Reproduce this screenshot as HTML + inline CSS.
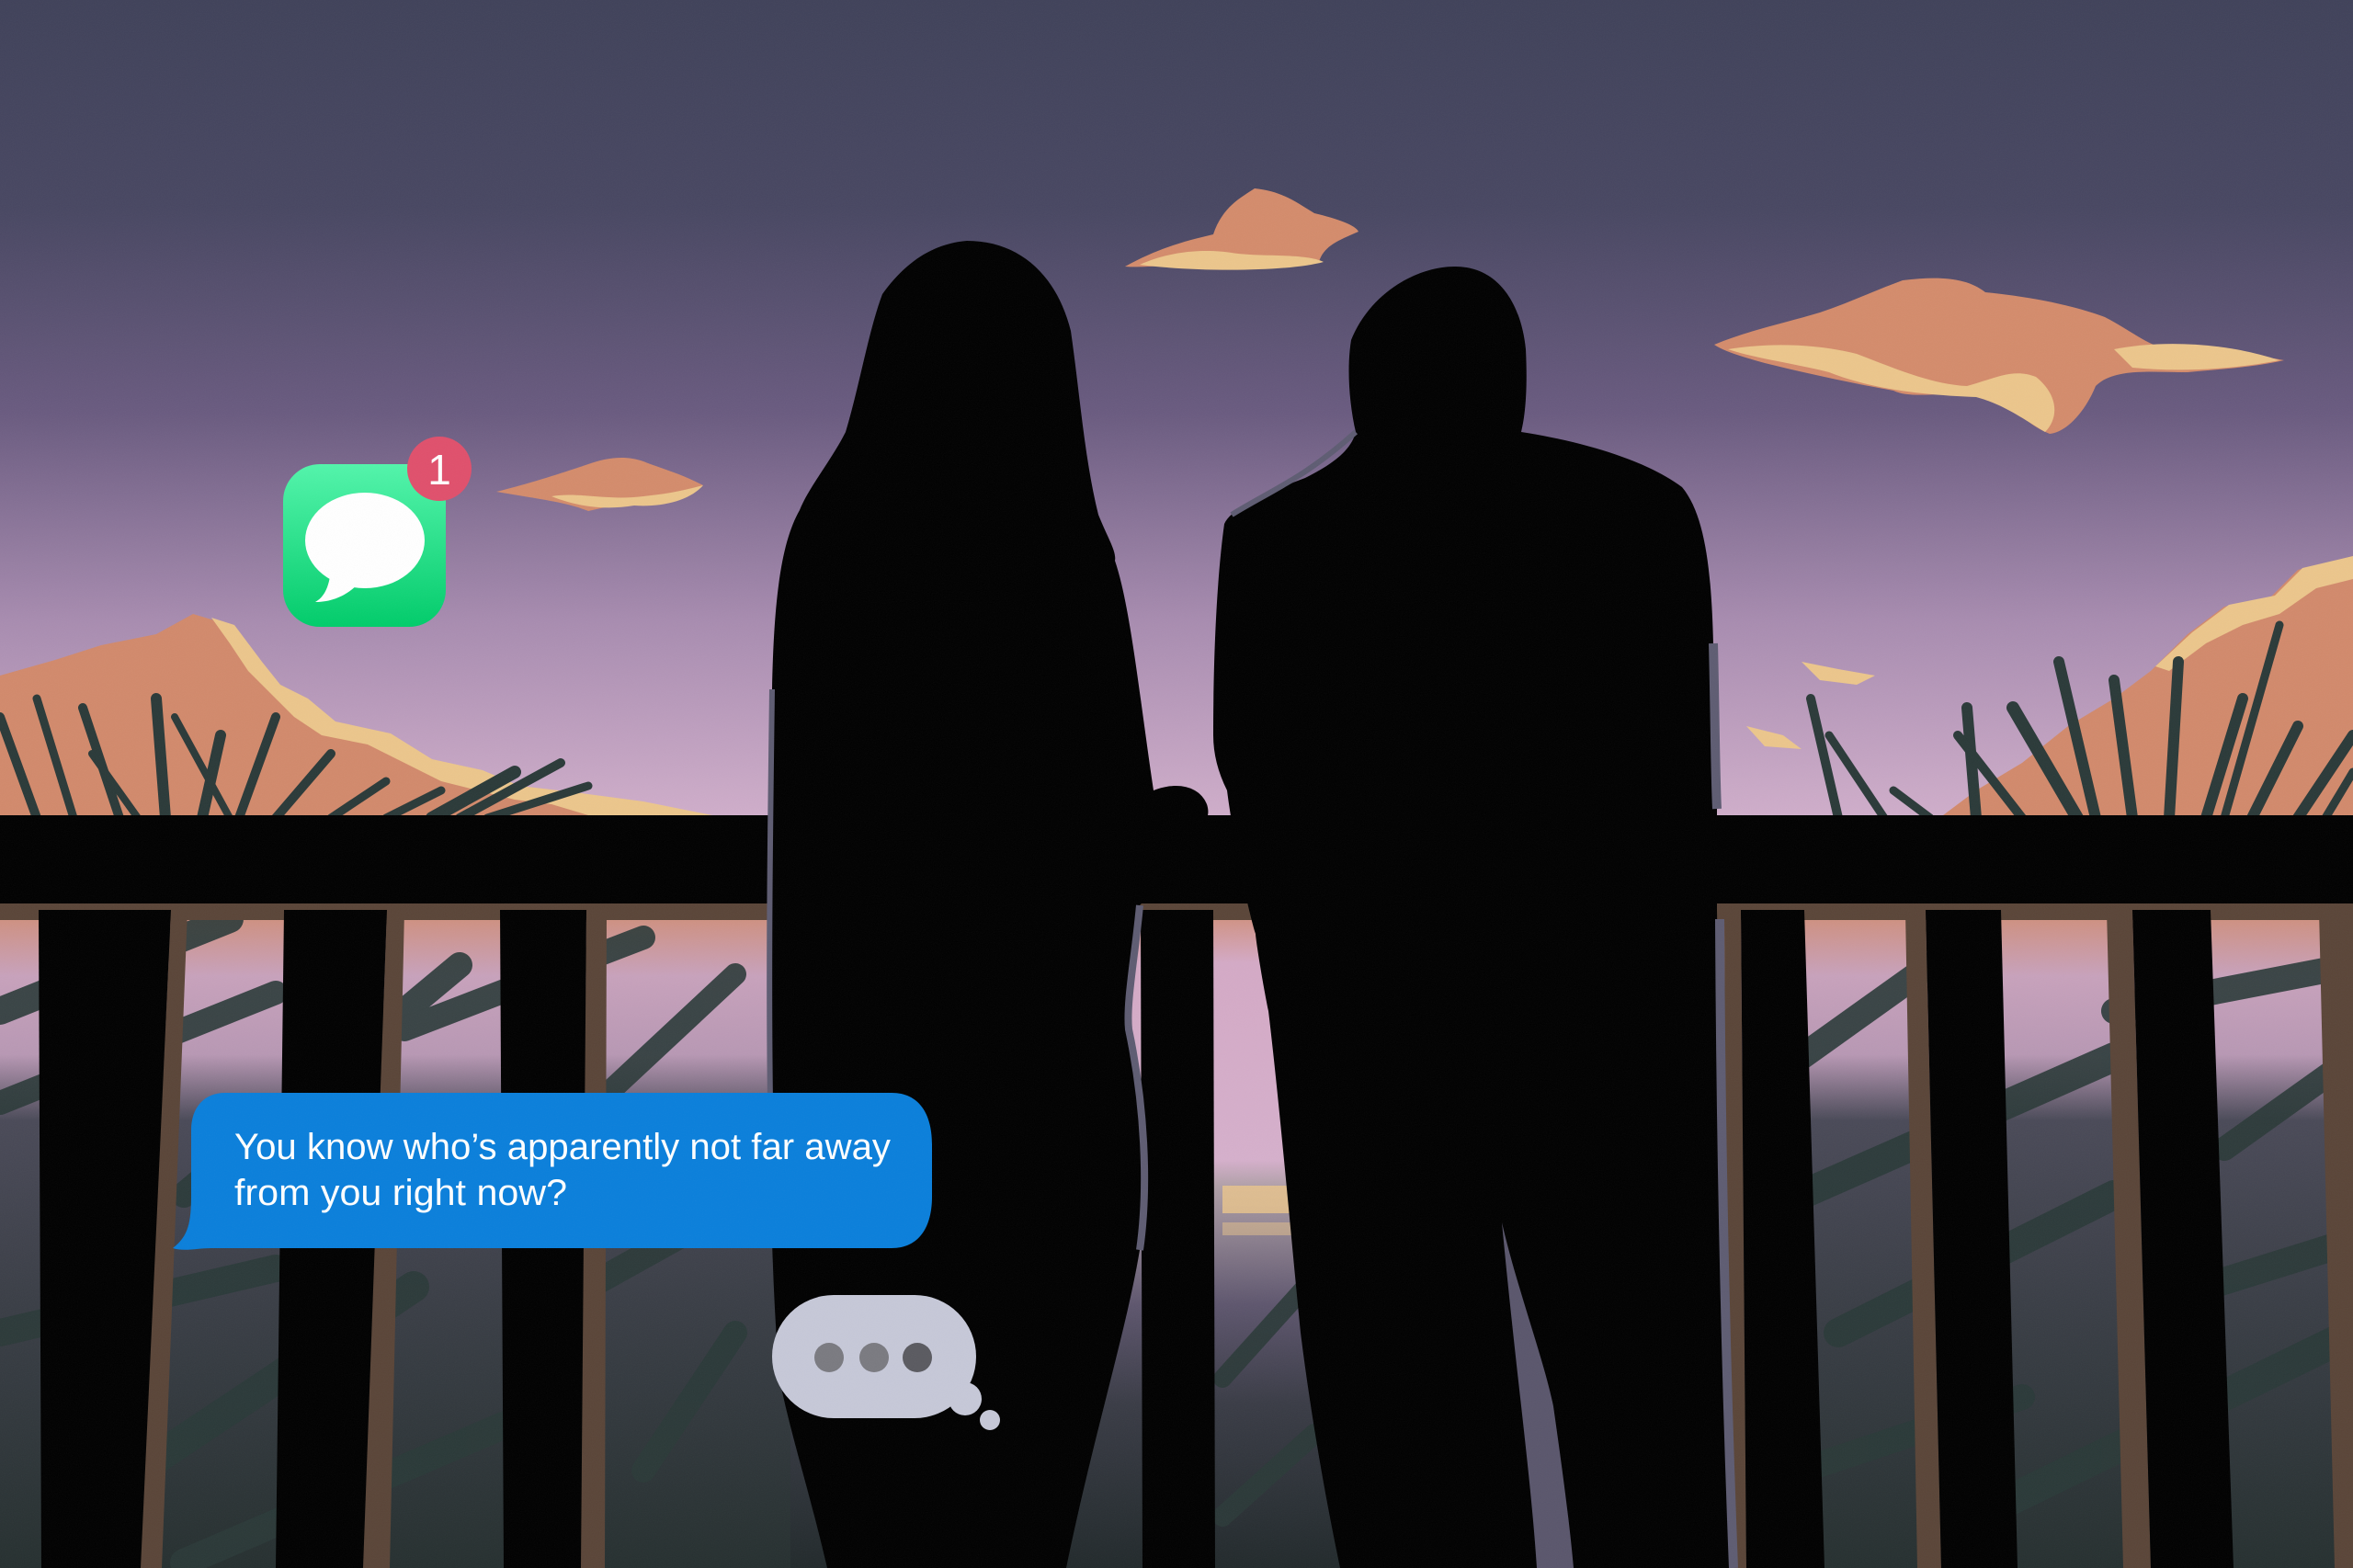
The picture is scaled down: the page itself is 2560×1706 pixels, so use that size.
<!DOCTYPE html>
<html><head><meta charset="utf-8"><style>
html,body{margin:0;padding:0;background:#000;}
svg{display:block;}
</style></head><body>
<svg width="2560" height="1706" viewBox="0 0 2560 1706" xmlns="http://www.w3.org/2000/svg">
<defs>
<linearGradient id="sky" x1="0" y1="0" x2="0" y2="1">
<stop offset="0" stop-color="#40425a"/>
<stop offset="0.25" stop-color="#484762"/>
<stop offset="0.5" stop-color="#6a5b80"/>
<stop offset="0.75" stop-color="#a88cb0"/>
<stop offset="1" stop-color="#d2b0cc"/>
</linearGradient>
<linearGradient id="below" x1="0" y1="0" x2="0" y2="1">
<stop offset="0" stop-color="#d08e78"/>
<stop offset="0.08" stop-color="#d4aac6"/>
<stop offset="0.38" stop-color="#d6b0cc"/>
<stop offset="0.42" stop-color="#b0a0a8"/>
<stop offset="0.6" stop-color="#5e566e"/>
<stop offset="0.75" stop-color="#3a3c46"/>
<stop offset="1" stop-color="#222a2c"/>
</linearGradient>
<linearGradient id="side" x1="0" y1="0" x2="0" y2="1">
<stop offset="0" stop-color="#d08e78"/>
<stop offset="0.1" stop-color="#c8a2bc"/>
<stop offset="0.22" stop-color="#b898b4"/>
<stop offset="0.32" stop-color="#4a4a58"/>
<stop offset="0.6" stop-color="#3a3e46"/>
<stop offset="1" stop-color="#263030"/>
</linearGradient>
<linearGradient id="green" x1="0" y1="0" x2="0" y2="1">
<stop offset="0" stop-color="#52f5ab"/>
<stop offset="1" stop-color="#00cc6a"/>
</linearGradient>
<filter id="grain"><feTurbulence type="fractalNoise" baseFrequency="0.9" numOctaves="2" result="n"/><feColorMatrix type="saturate" values="0"/><feComponentTransfer><feFuncA type="table" tableValues="0 0.1"/></feComponentTransfer></filter>
</defs>
<rect width="2560" height="900" fill="url(#sky)"/>
<g>
<path d="M1224,290 C1260,270 1290,262 1320,255 C1330,225 1350,215 1365,205 C1395,208 1410,220 1430,232 C1455,238 1475,245 1478,252 C1455,262 1440,268 1435,285 C1400,292 1350,292 1310,288 C1280,286 1250,292 1224,290Z" fill="#d48c6c"/>
<path d="M1240,288 C1280,270 1320,272 1340,275 C1370,280 1420,275 1440,285 C1400,296 1300,296 1240,288Z" fill="#ecc68c"/>
<path d="M1865,375 C1900,360 1940,352 1980,340 C2010,330 2040,316 2070,305 C2110,300 2140,302 2160,318 C2200,322 2250,330 2290,345 C2320,360 2340,380 2370,382 C2410,385 2450,385 2485,392 C2450,400 2410,402 2380,405 C2340,405 2300,400 2280,420 C2270,445 2250,470 2230,472 C2200,460 2190,438 2160,430 C2120,425 2080,435 2060,425 C2020,418 1960,405 1920,395 C1895,388 1875,382 1865,375Z" fill="#d48c6c"/>
<path d="M1880,380 C1930,372 1980,375 2020,385 C2060,400 2100,418 2140,420 C2170,412 2190,400 2215,410 C2240,430 2240,455 2225,470 C2200,455 2180,440 2150,432 C2100,430 2040,425 1990,405 C1950,395 1910,390 1880,380Z" fill="#ecc68c"/>
<path d="M2300,380 C2350,370 2420,372 2480,392 C2430,402 2370,405 2320,400Z" fill="#ecc68c"/>
<path d="M540,535 C580,525 610,515 640,505 C660,498 680,495 700,502 C720,510 740,515 765,528 C740,540 720,548 700,550 C680,545 660,552 640,556 C620,548 600,545 570,540Z" fill="#d48c6c"/>
<path d="M600,540 C630,535 660,545 700,540 C720,538 740,535 765,528 C750,545 720,552 690,550 C660,555 630,552 600,540Z" fill="#ecc68c"/>
<path d="M0,735 L60,718 L110,702 L170,690 L210,668 L250,680 L280,720 L300,745 L330,760 L360,790 L420,800 L470,830 L520,840 L560,860 L620,865 L700,875 L770,887 L0,887Z" fill="#d28a6c"/>
<path d="M230,672 L255,680 L285,720 L305,745 L335,760 L365,785 L425,798 L470,826 L525,838 L565,855 L625,862 L700,872 L775,887 L640,887 L600,875 L560,870 L520,860 L480,850 L440,830 L400,810 L350,800 L320,780 L300,760 L270,730 L250,700Z" fill="#ecc68c"/>
<path d="M2560,605 L2500,620 L2470,650 L2420,660 L2380,690 L2340,730 L2300,760 L2250,790 L2200,830 L2150,860 L2110,890 L2560,890Z" fill="#d28a6c"/>
<path d="M2560,605 L2505,618 L2475,648 L2425,658 L2385,688 L2345,725 L2360,730 L2400,700 L2440,680 L2480,668 L2520,640 L2560,630Z" fill="#ecc68c"/>
<path d="M1960,720 L2000,728 L2040,735 L2020,745 L1980,740Z" fill="#ecc68c"/>
<path d="M1900,790 L1940,800 L1960,815 L1920,812Z" fill="#ecc68c"/>
</g>
<g stroke="#2b3a39" stroke-linecap="round" fill="none">
<path d="M40,890 L0,780" stroke-width="10"/>
<path d="M80,890 L40,760" stroke-width="9"/>
<path d="M130,890 L90,770" stroke-width="10"/>
<path d="M180,890 L170,760" stroke-width="12"/>
<path d="M220,890 L240,800" stroke-width="12"/>
<path d="M260,890 L300,780" stroke-width="10"/>
<path d="M300,890 L360,820" stroke-width="10"/>
<path d="M360,890 L420,850" stroke-width="9"/>
<path d="M420,890 L480,860" stroke-width="9"/>
<path d="M470,890 L560,840" stroke-width="14"/>
<path d="M500,890 L610,830" stroke-width="10"/>
<path d="M530,890 L640,855" stroke-width="9"/>
<path d="M250,890 L190,780" stroke-width="8"/>
<path d="M150,890 L100,820" stroke-width="8"/>
<path d="M2000,890 L1970,760" stroke-width="10"/>
<path d="M2050,890 L1990,800" stroke-width="9"/>
<path d="M2100,890 L2060,860" stroke-width="9"/>
<path d="M2150,890 L2140,770" stroke-width="12"/>
<path d="M2200,890 L2130,800" stroke-width="10"/>
<path d="M2260,890 L2190,770" stroke-width="14"/>
<path d="M2280,890 L2240,720" stroke-width="12"/>
<path d="M2320,890 L2300,740" stroke-width="12"/>
<path d="M2360,890 L2370,720" stroke-width="12"/>
<path d="M2400,890 L2440,760" stroke-width="12"/>
<path d="M2450,890 L2500,790" stroke-width="12"/>
<path d="M2500,890 L2560,800" stroke-width="12"/>
<path d="M2420,890 L2480,680" stroke-width="9"/>
<path d="M2530,890 L2560,840" stroke-width="9"/>
</g>
<rect x="0" y="990" width="2560" height="716" fill="url(#below)"/>
<rect x="0" y="990" width="860" height="716" fill="url(#side)"/>
<rect x="1880" y="990" width="680" height="716" fill="url(#side)"/>
<g fill="#ecc68c" opacity="0.8">
<rect x="1330" y="1290" width="540" height="30"/>
<rect x="1330" y="1330" width="540" height="14" opacity="0.6"/>
<ellipse cx="470" cy="1250" rx="40" ry="30"/>
</g>
<g stroke="#2b3a39" stroke-linecap="round" fill="none" opacity="0.9">
<path d="M0,1100 L250,1000" stroke-width="30"/>
<path d="M0,1200 L300,1080" stroke-width="26"/>
<path d="M200,1300 L500,1050" stroke-width="28"/>
<path d="M300,1250 L560,1300" stroke-width="30"/>
<path d="M150,1600 L450,1400" stroke-width="34"/>
<path d="M0,1450 L300,1380" stroke-width="30"/>
<path d="M200,1700 L550,1550" stroke-width="30"/>
<path d="M440,1120 L700,1020" stroke-width="26"/>
<path d="M650,1200 L800,1060" stroke-width="24"/>
<path d="M640,1400 L820,1300" stroke-width="28"/>
<path d="M700,1600 L800,1450" stroke-width="26"/>
<path d="M1330,1500 L1420,1400" stroke-width="20"/>
<path d="M1330,1650 L1430,1560" stroke-width="22"/>
<path d="M1630,1550 L1700,1480" stroke-width="18"/>
<path d="M1960,1150 L2100,1050" stroke-width="28"/>
<path d="M1960,1300 L2300,1150" stroke-width="32"/>
<path d="M2000,1450 L2300,1300" stroke-width="32"/>
<path d="M2150,1650 L2560,1450" stroke-width="34"/>
<path d="M2300,1100 L2560,1050" stroke-width="28"/>
<path d="M2420,1250 L2560,1150" stroke-width="26"/>
<path d="M2400,1400 L2560,1350" stroke-width="30"/>
<path d="M1960,1600 L2200,1520" stroke-width="28"/>
</g>
<rect x="0" y="983" width="2560" height="18" fill="#5a4538"/>
<g fill="#5a4538">
<polygon points="186,990 204,990 176,1706 152,1706"/>
<polygon points="421,990 440,990 424,1706 394,1706"/>
<polygon points="638,990 660,990 658,1706 630,1706"/>
<polygon points="1876,990 1894,990 1900,1706 1878,1706"/>
<polygon points="2073,990 2095,990 2112,1706 2086,1706"/>
<polygon points="2292,990 2320,990 2340,1706 2310,1706"/>
<polygon points="2523,990 2560,990 2560,1706 2540,1706"/>
</g>
<g fill="#000">
<polygon points="42,990 186,990 153,1706 45,1706"/>
<polygon points="309,990 421,990 395,1706 300,1706"/>
<polygon points="544,990 638,990 632,1706 548,1706"/>
<polygon points="1241,990 1320,990 1322,1706 1243,1706"/>
<polygon points="1894,990 1963,990 1985,1706 1900,1706"/>
<polygon points="2095,990 2177,990 2195,1706 2112,1706"/>
<polygon points="2320,990 2405,990 2430,1706 2340,1706"/>
</g>
<rect x="0" y="887" width="2560" height="96" fill="#000"/>
<path d="M1052,262 C1110,262 1150,300 1165,360 C1175,430 1180,500 1195,560 C1205,585 1215,600 1213,610 C1230,660 1240,760 1255,860 C1280,850 1305,855 1313,875 C1318,890 1310,900 1290,905 C1270,935 1255,970 1240,985 C1235,1040 1225,1090 1228,1120 C1245,1200 1250,1290 1240,1360 C1225,1450 1190,1560 1160,1706 L900,1706 C880,1620 860,1560 848,1500 C840,1400 838,1300 838,1200 C836,1050 838,900 840,750 C842,650 850,590 870,555 C880,530 905,500 920,470 C935,420 945,360 960,320 C985,285 1015,265 1052,262Z" fill="#000"/>
<path d="M1240,985 C1235,1040 1225,1090 1228,1120 C1245,1200 1250,1290 1240,1360" stroke="#5e5c72" stroke-width="8" fill="none"/>
<path d="M840,750 C838,900 836,1050 838,1200" stroke="#5e5c72" stroke-width="6" fill="none"/>
<path d="M1583,290 C1630,290 1655,330 1660,380 C1662,420 1660,450 1655,470 C1720,480 1790,500 1830,530 C1855,560 1862,620 1864,700 C1866,780 1866,840 1868,880 L1868,990 C1870,1100 1871,1200 1874,1300 C1878,1450 1882,1580 1886,1706 L1458,1706 C1440,1620 1425,1530 1415,1450 C1405,1350 1392,1200 1380,1100 C1372,1060 1366,1020 1366,1016 C1355,980 1340,900 1335,860 C1325,840 1320,820 1320,800 C1320,700 1325,620 1332,570 C1340,552 1380,535 1420,520 C1450,505 1470,490 1475,470 C1468,440 1465,400 1470,370 C1490,320 1540,290 1583,290Z" fill="#000"/>
<path d="M1634,1330 C1650,1400 1680,1480 1690,1530 C1700,1600 1708,1660 1712,1706 L1672,1706 C1665,1600 1650,1500 1634,1330Z" fill="#5a566c"/>
<path d="M1864,700 C1866,780 1866,840 1868,880 M1871,1000 C1872,1200 1876,1450 1886,1706" stroke="#5e5c72" stroke-width="10" fill="none"/>
<path d="M1340,560 C1380,535 1420,520 1475,470" stroke="#5e5c72" stroke-width="6" fill="none"/>
<rect x="308" y="505" width="177" height="177" rx="40" fill="url(#green)"/>
<ellipse cx="397" cy="588" rx="65" ry="52" fill="#fff"/>
<path d="M360,620 C358,640 352,650 343,655 C365,655 380,645 390,635Z" fill="#fff"/>
<circle cx="478" cy="510" r="35" fill="#e0506c"/>
<text x="478" y="527" font-family="Liberation Sans, sans-serif" font-size="46" fill="#fff" text-anchor="middle">1</text>
<path d="M245,1189 L970,1189 C1000,1189 1014,1212 1014,1245 L1014,1302 C1014,1335 1000,1358 970,1358 L230,1358 C215,1358 200,1362 188,1358 C205,1345 208,1330 208,1300 L208,1230 C208,1205 222,1189 245,1189Z" fill="#0a7fdb"/>
<text font-family="Liberation Sans, sans-serif" font-size="40" fill="#fff">
<tspan x="255" y="1261" textLength="714" lengthAdjust="spacingAndGlyphs">You know who’s apparently not far away</tspan>
<tspan x="255" y="1311" textLength="362" lengthAdjust="spacingAndGlyphs">from you right now?</tspan>
</text>
<rect x="840" y="1409" width="222" height="134" rx="67" fill="#c6c8d8"/>
<circle cx="1050" cy="1522" r="18" fill="#c6c8d8"/>
<circle cx="1077" cy="1545" r="11" fill="#c6c8d8"/>
<circle cx="902" cy="1477" r="16" fill="#7a7a80"/>
<circle cx="951" cy="1477" r="16" fill="#7a7a80"/>
<circle cx="998" cy="1477" r="16" fill="#5a5a60"/>
<rect width="2560" height="1706" filter="url(#grain)" opacity="0.5"/>
</svg>
</body></html>
